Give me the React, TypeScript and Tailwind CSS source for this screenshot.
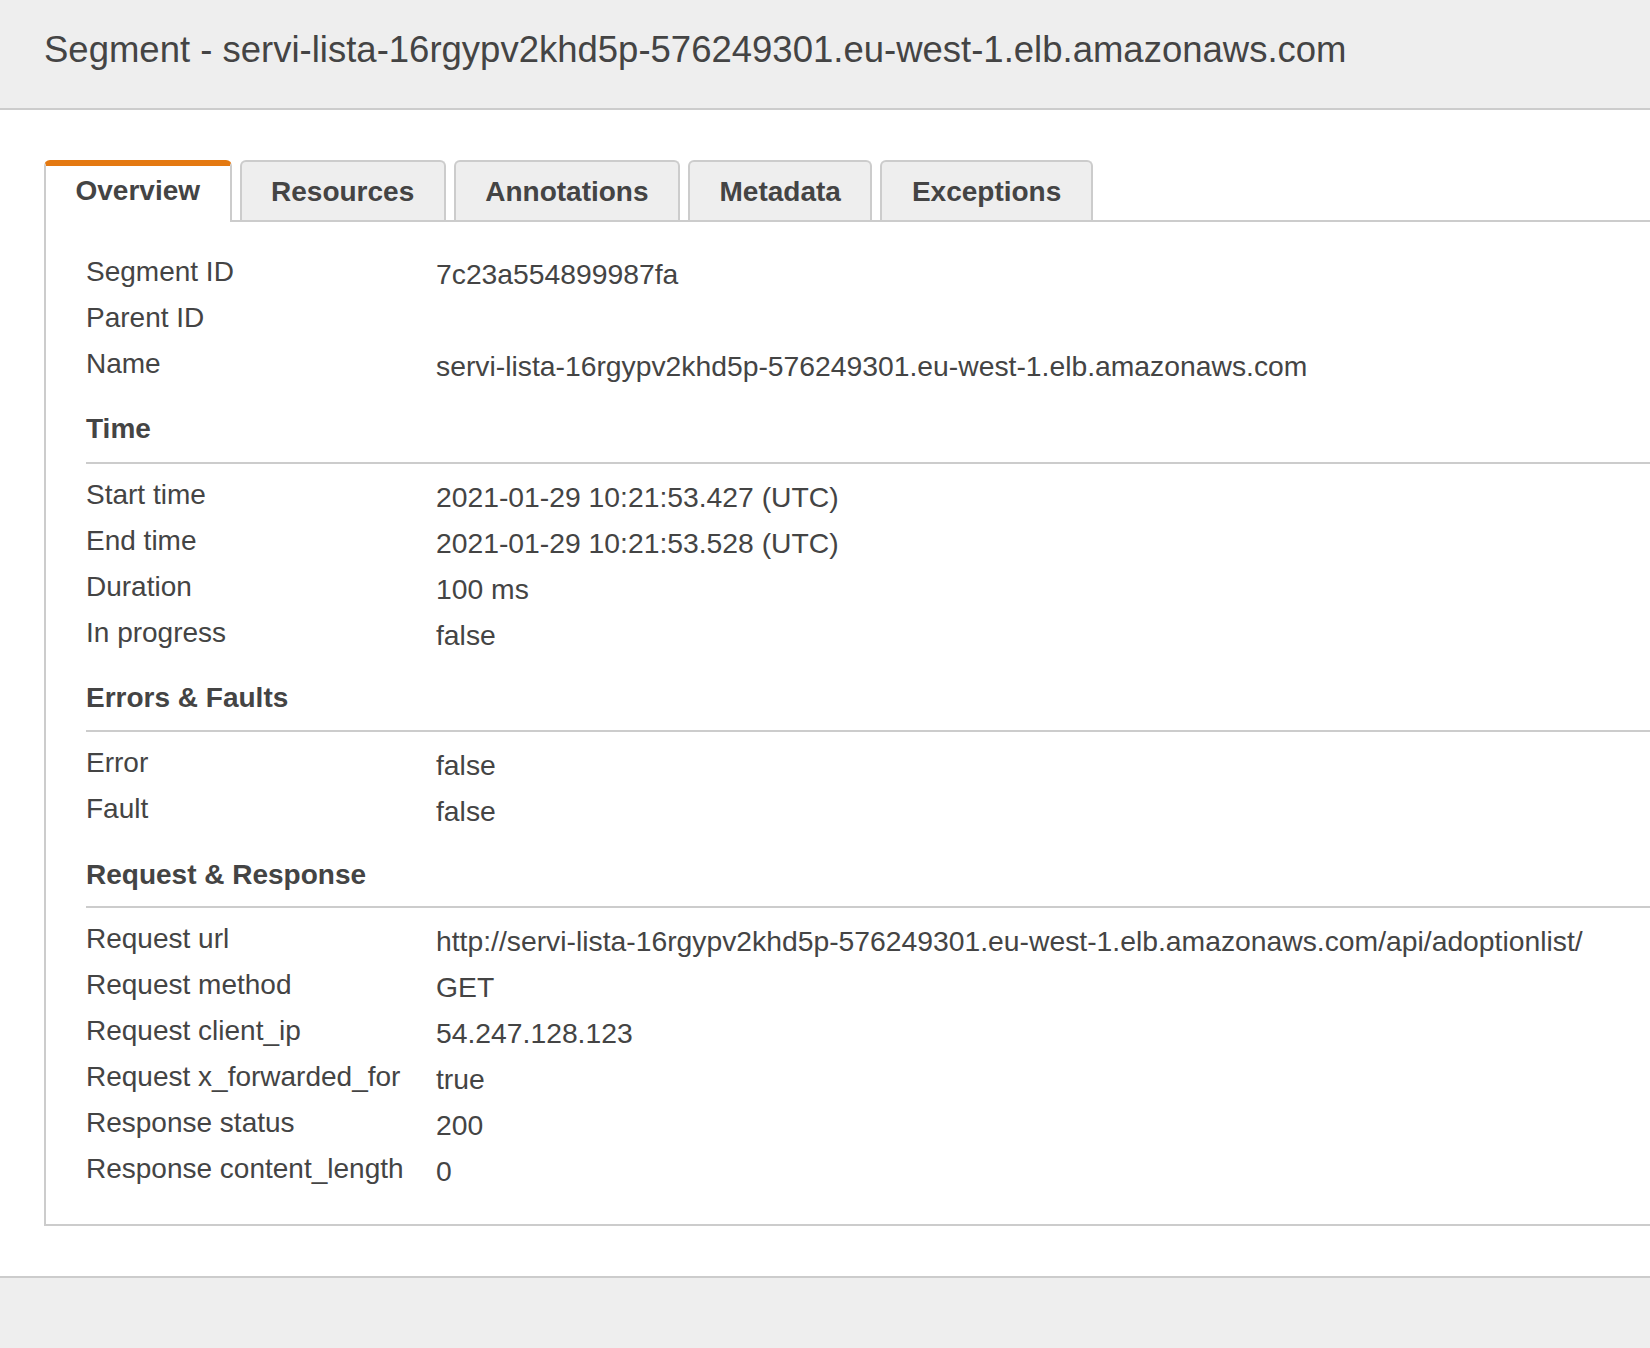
import React from "react";

type Row = { label: string; value: string };

type Section = { title?: string; head?: string; rows: Row[] };

const SECTIONS: Section[] = [
  {
    rows: [
      { label: "Segment ID", value: "7c23a554899987fa" },
      { label: "Parent ID", value: "" },
      { label: "Name", value: "servi-lista-16rgypv2khd5p-576249301.eu-west-1.elb.amazonaws.com" },
    ],
  },
  {
    title: "Time",
    head: "mt-[22px] pb-[13px]",
    rows: [
      { label: "Start time", value: "2021-01-29 10:21:53.427 (UTC)" },
      { label: "End time", value: "2021-01-29 10:21:53.528 (UTC)" },
      { label: "Duration", value: "100 ms" },
      { label: "In progress", value: "false" },
    ],
  },
  {
    title: "Errors & Faults",
    head: "mt-[22px] pb-[12px]",
    rows: [
      { label: "Error", value: "false" },
      { label: "Fault", value: "false" },
    ],
  },
  {
    title: "Request & Response",
    head: "mt-[23px] pb-[11px]",
    rows: [
      { label: "Request url", value: "http://servi-lista-16rgypv2khd5p-576249301.eu-west-1.elb.amazonaws.com/api/adoptionlist/" },
      { label: "Request method", value: "GET" },
      { label: "Request client_ip", value: "54.247.128.123" },
      { label: "Request x_forwarded_for", value: "true" },
      { label: "Response status", value: "200" },
      { label: "Response content_length", value: "0" },
    ],
  },
];

const TABS = ["Overview", "Resources", "Annotations", "Metadata", "Exceptions"];

function Tabs() {
  return (
    <div className="flex items-end gap-2 border-b-2 border-[#cccccc] h-[62px]">
      {TABS.map((t, i) =>
        i === 0 ? (
          <div
            key={t}
            className="h-[62px] -mb-[2px] px-[29.5px] bg-white border-2 border-b-0 border-[#cccccc] border-t-[6px] border-t-[#e47911] rounded-t-[6px] font-bold text-[28px] leading-[50px] text-[#444444]"
          >
            {t}
          </div>
        ) : (
          <div
            key={t}
            className="h-[60px] px-[29.5px] bg-[#eeeeee] border-2 border-b-0 border-[#cccccc] rounded-t-[6px] font-bold text-[28px] leading-[60px] text-[#444444]"
          >
            {t}
          </div>
        )
      )}
    </div>
  );
}

export default function App() {
  return (
    <div
      className="min-h-screen flex flex-col bg-white text-[#444444] overflow-hidden"
      style={{ fontFamily: '"Liberation Sans", Arial, Helvetica, sans-serif' }}
    >
      <header className="h-[110px] shrink-0 bg-[#eeeeee] border-b-2 border-[#cccccc] pl-[44px] pt-[30px]">
        <h1 className="text-[36.5px] leading-[40px] whitespace-nowrap">
          Segment - servi-lista-16rgypv2khd5p-576249301.eu-west-1.elb.amazonaws.com
        </h1>
      </header>

      <main className="pl-[44px] pt-[50px] pb-[50px] shrink-0">
        <Tabs />
        <div className="border-l-2 border-b-2 border-[#cccccc] pl-[40px] pt-[27px] pb-[32px] text-[28px]">
          {SECTIONS.map((s, si) => (
            <section key={si}>
              {s.title && (
                <h2 className={`${s.head} mb-[8px] border-b-2 border-[#cccccc] font-bold leading-[40px]`}>
                  {s.title}
                </h2>
              )}
              {s.rows.map((r) => (
                <div key={r.label} className="flex h-[46px] leading-[46px] whitespace-nowrap">
                  <div className="w-[350px] shrink-0">{r.label}</div>
                  <div className="pt-[2px] text-[28.3px]">{r.value}</div>
                </div>
              ))}
            </section>
          ))}
        </div>
      </main>

      <footer className="flex-1 bg-[#eeeeee] border-t-2 border-[#cccccc]" />
    </div>
  );
}
